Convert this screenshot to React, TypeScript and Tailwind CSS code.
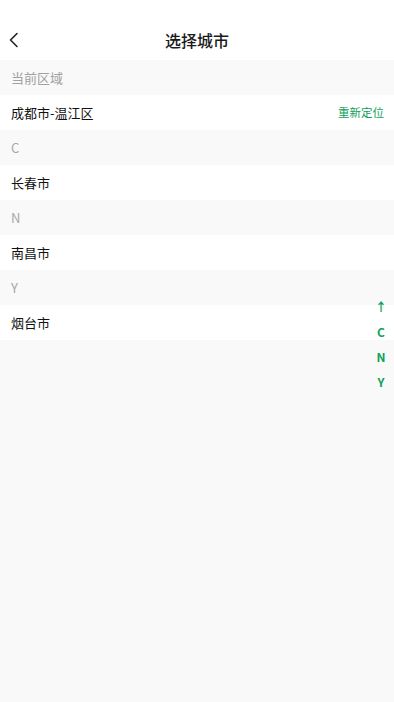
import { useState } from "react";

interface Section {
  letter: string;
  cities: string[];
}

const sections: Section[] = [
  { letter: "C", cities: ["长春市"] },
  { letter: "N", cities: ["南昌市"] },
  { letter: "Y", cities: ["烟台市"] },
];

const font = "font-['Noto_Sans_CJK_SC','Noto_Sans',sans-serif]";

export default function App() {
  const [current] = useState("成都市-温江区");

  return (
    <div className={`relative flex min-h-[702px] w-full flex-col bg-[#f9f9f9] ${font}`}>
      {/* header */}
      <div className="h-[20px] bg-white" />
      <div className="relative flex h-[40px] items-center justify-center bg-white">
        <button className="absolute left-[7px] top-[12px] p-0" aria-label="返回">
          <svg width="14" height="16" viewBox="0 0 14 16" fill="none">
            <path d="M10 1.5 L3.5 8 L10 14.5" stroke="#222" strokeWidth="1.6" strokeLinecap="round" strokeLinejoin="round" />
          </svg>
        </button>
        <h1 className="text-[16px] font-medium text-[#1a1a1a]">选择城市</h1>
      </div>

      {/* current area */}
      <div className="flex h-[35px] items-center bg-[#f9f9f9] px-[11px] text-[13px] text-[#a0a0a0]">
        当前区域
      </div>
      <div className="flex h-[35px] items-center justify-between bg-white pl-[11px] pr-[10px]">
        <span className="text-[13px] text-[#111]">{current}</span>
        <span className="text-[11.5px] text-[#11a05a]">重新定位</span>
      </div>

      {sections.map((s) => (
        <div key={s.letter}>
          <div className="flex h-[35px] items-center bg-[#f9f9f9] px-[11px] text-[13px] text-[#a8a8a8]">
            {s.letter}
          </div>
          {s.cities.map((c) => (
            <div key={c} className="flex h-[35px] items-center bg-white px-[11px] text-[13px] text-[#111]">
              {c}
            </div>
          ))}
        </div>
      ))}

      {/* index bar */}
      <div className="absolute right-[5px] top-[294px] flex w-[16px] flex-col items-center text-[12px] font-bold text-[#11a05a]">
        <span className="flex h-[25px] items-center">↑</span>
        {sections.map((s) => (
          <span key={s.letter} className="flex h-[25px] items-center">
            {s.letter}
          </span>
        ))}
      </div>
    </div>
  );
}
